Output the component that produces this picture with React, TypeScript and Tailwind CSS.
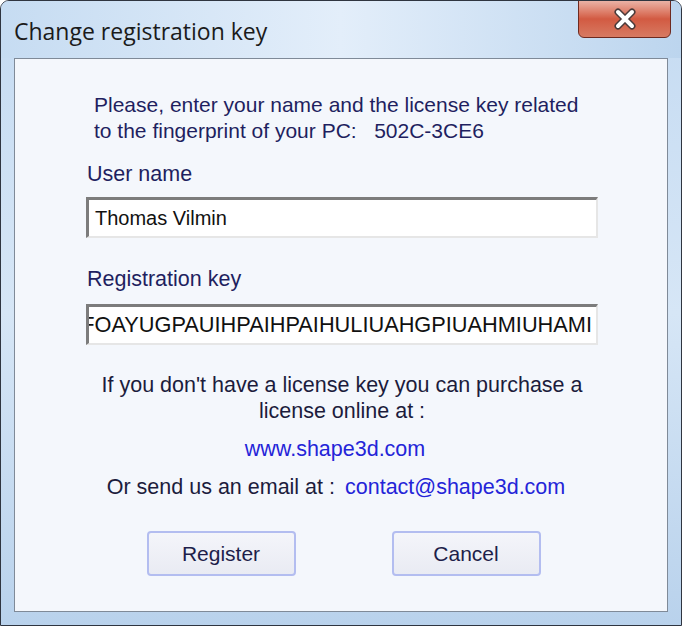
import React from "react";

function CloseGlyph() {
    return (
        <svg width="26" height="22" viewBox="0 0 26 22">
            <path d="M6 4 L20 18 M20 4 L6 18" stroke="#4a3a3a" strokeWidth="7" strokeLinecap="round" />
            <path d="M6 4 L20 18 M20 4 L6 18" stroke="#ffffff" strokeWidth="4" strokeLinecap="round" />
        </svg>
    );
}

function SunkenInput({ value, alignEnd, big }: { value: string; alignEnd?: boolean; big?: boolean }) {
    return (
        <div
            className={
                "flex items-center h-[41px] bg-white overflow-hidden whitespace-nowrap pl-[6px] pr-[4px] " +
                "border-t-[3px] border-l-[3px] border-r-2 border-b-2 " +
                "border-t-[#7c7c7c] border-l-[#7c7c7c] border-r-[#e6e6e6] border-b-[#e6e6e6] " +
                (alignEnd ? "justify-end " : "justify-start ") +
                (big ? "text-[21.75px]" : "text-[20px]")
            }
        >
            <span className="text-[#111111] shrink-0">{value}</span>
        </div>
    );
}

function DialogButton({ label }: { label: string }) {
    return (
        <button className="w-[149px] h-[45px] rounded-[4px] border-2 border-[#b3bdf0] bg-gradient-to-b from-[#f4f5fa] to-[#e9ebf3] text-[#1e1e4a] text-[21px]">
            {label}
        </button>
    );
}

export default function App() {
    return (
        <div className="w-[684px] h-[628px] bg-white">
            <div
                className="w-[682px] h-[626px] flex flex-col rounded-t-[9px] border border-[#2f3540] bg-gradient-to-b from-[#c5dbf2] via-[#d6e6f6] to-[#b9d2ec] overflow-hidden"
                style={{ fontFamily: '"Liberation Sans", Arial, sans-serif' }}
            >
                {/* title bar */}
                <div className="h-[57px] flex items-start justify-between pl-[13px] bg-gradient-to-r from-[#c6dcf2] via-[#e3eefa] to-[#bcd5ee]">
                    <span
                        className="mt-[13px] text-[23px] text-[#1b1b1b]"
                        style={{ fontFamily: '"Open Sans", "Noto Sans", sans-serif' }}
                    >
                        Change registration key
                    </span>
                    <div className="mr-[10px] w-[93px] h-[38px] -mt-px rounded-b-[6px] border border-[#6e2a20] bg-gradient-to-b from-[#eab2a6] via-[#d25a42] to-[#d77a62] flex items-center justify-center">
                        <CloseGlyph />
                    </div>
                </div>

                {/* client area */}
                <div className="flex-1 px-[13px] pb-[13px]">
                    <div className="h-full border border-[#7f8a98] bg-[#f4f7fc] pl-[71px] pr-[69px] pt-[33px] text-[21.5px] leading-[26px]">
                        <p className="pl-[8px] text-[21px] text-[#1f1f60] whitespace-nowrap">
                            Please, enter your name and the license key related
                            <br />
                            to the fingerprint of your PC:&nbsp;&nbsp;&nbsp;502C-3CE6
                        </p>
                        <p className="mt-[17px] pl-px text-[#1f1f60]">User name</p>
                        <div className="mt-[10px]">
                            <SunkenInput value="Thomas Vilmin" />
                        </div>
                        <p className="mt-[28px] pl-px text-[#1f1f60]">Registration key</p>
                        <div className="mt-[12px]">
                            <SunkenInput value="AFOAYUGPAUIHPAIHPAIHULIUAHGPIUAHMIUHAMI" alignEnd big />
                        </div>
                        <p className="mt-[27px] text-center text-[#1c1c3c] whitespace-nowrap">
                            If you don't have a license key you can purchase a
                            <br />
                            license online at :
                        </p>
                        <p className="mt-[12px] text-center text-[#2424d8] pr-[14px]">www.shape3d.com</p>
                        <p className="mt-[12px] flex justify-center gap-[10px] text-[#1c1c3c] pr-[12px]">
                            <span>Or send us an email at :</span>
                            <span className="text-[#2424d8]">contact@shape3d.com</span>
                        </p>
                        <div className="mt-[31px] flex justify-center gap-[96px] pl-[3px]">
                            <DialogButton label="Register" />
                            <DialogButton label="Cancel" />
                        </div>
                    </div>
                </div>
            </div>
        </div>
    );
}
